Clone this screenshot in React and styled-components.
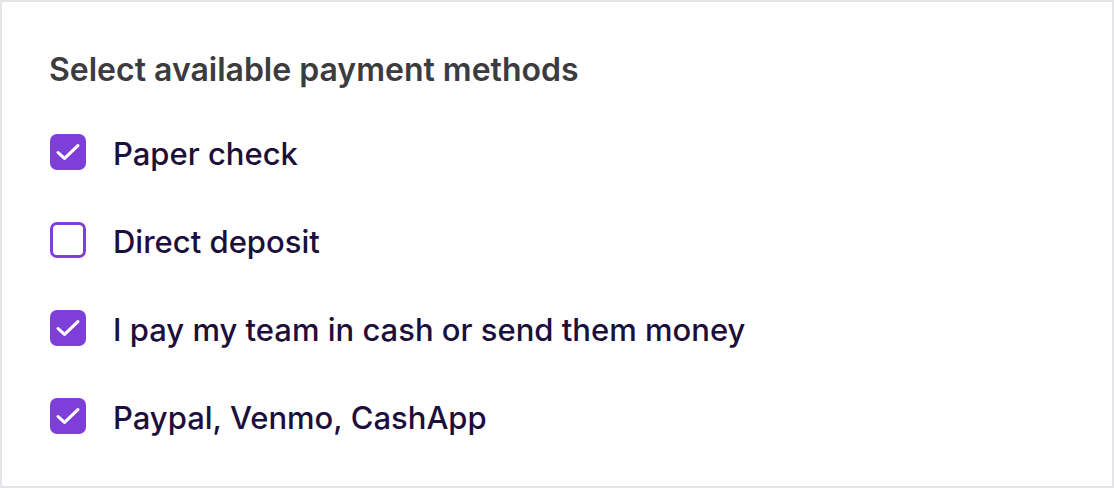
import React, { useState } from "react";
import styled, { createGlobalStyle } from "styled-components";

const Global = createGlobalStyle`
  html, body { margin: 0; padding: 0; background: #fff; }
  * { box-sizing: border-box; }
`;

const Card = styled.div`
  width: 1114px;
  height: 488px;
  border: 2px solid #e4e4e9;
  background: #fff;
  padding: 49px 47px 0 47px;
  font-family: Inter, "Noto Sans", sans-serif;
`;

const Heading = styled.h2`
  margin: 0;
  font-size: 32px;
  line-height: 38px;
  font-weight: 600;
  color: #3b3b40;
  letter-spacing: 0;
`;

const List = styled.div`
  display: flex;
  flex-direction: column;
  gap: 52px;
  margin-top: 45px;
  padding-left: 1px;
`;

const Row = styled.label`
  display: flex;
  align-items: center;
  gap: 27px;
  height: 36px;
  cursor: pointer;
`;

const Box = styled.span`
  width: 36px;
  height: 36px;
  border-radius: 7px;
  flex: none;
  display: flex;
  align-items: center;
  justify-content: center;
  background: ${(p) => (p.$checked ? "#7e3fd8" : "#fff")};
  border: ${(p) => (p.$checked ? "none" : "3px solid #7e3fd8")};
`;

const Label = styled.span`
  font-size: 31px;
  line-height: 36px;
  margin-top: 3px;
  font-weight: 500;
  color: #1d0f3b;
  letter-spacing: 0;
`;

const Check = () => (
  <svg width="28" height="28" viewBox="0 0 24 24" fill="none" stroke="#fff" strokeWidth="2.7" strokeLinecap="round" strokeLinejoin="round">
    <path d="M3.5 12.5l5.5 5L20.5 6.5" />
  </svg>
);

const items = [
  { label: "Paper check", checked: true },
  { label: "Direct deposit", checked: false },
  { label: "I pay my team in cash or send them money", checked: true },
  { label: "Paypal, Venmo, CashApp", checked: true },
];

export default function App() {
  const [state, setState] = useState(items.map((i) => i.checked));
  return (
    <>
      <Global />
      <Card>
        <Heading>Select available payment methods</Heading>
        <List>
          {items.map((it, i) => (
            <Row key={it.label} onClick={() => setState((s) => s.map((v, j) => (j === i ? !v : v)))}>
              <Box $checked={state[i]}>{state[i] && <Check />}</Box>
              <Label>{it.label}</Label>
            </Row>
          ))}
        </List>
      </Card>
    </>
  );
}
